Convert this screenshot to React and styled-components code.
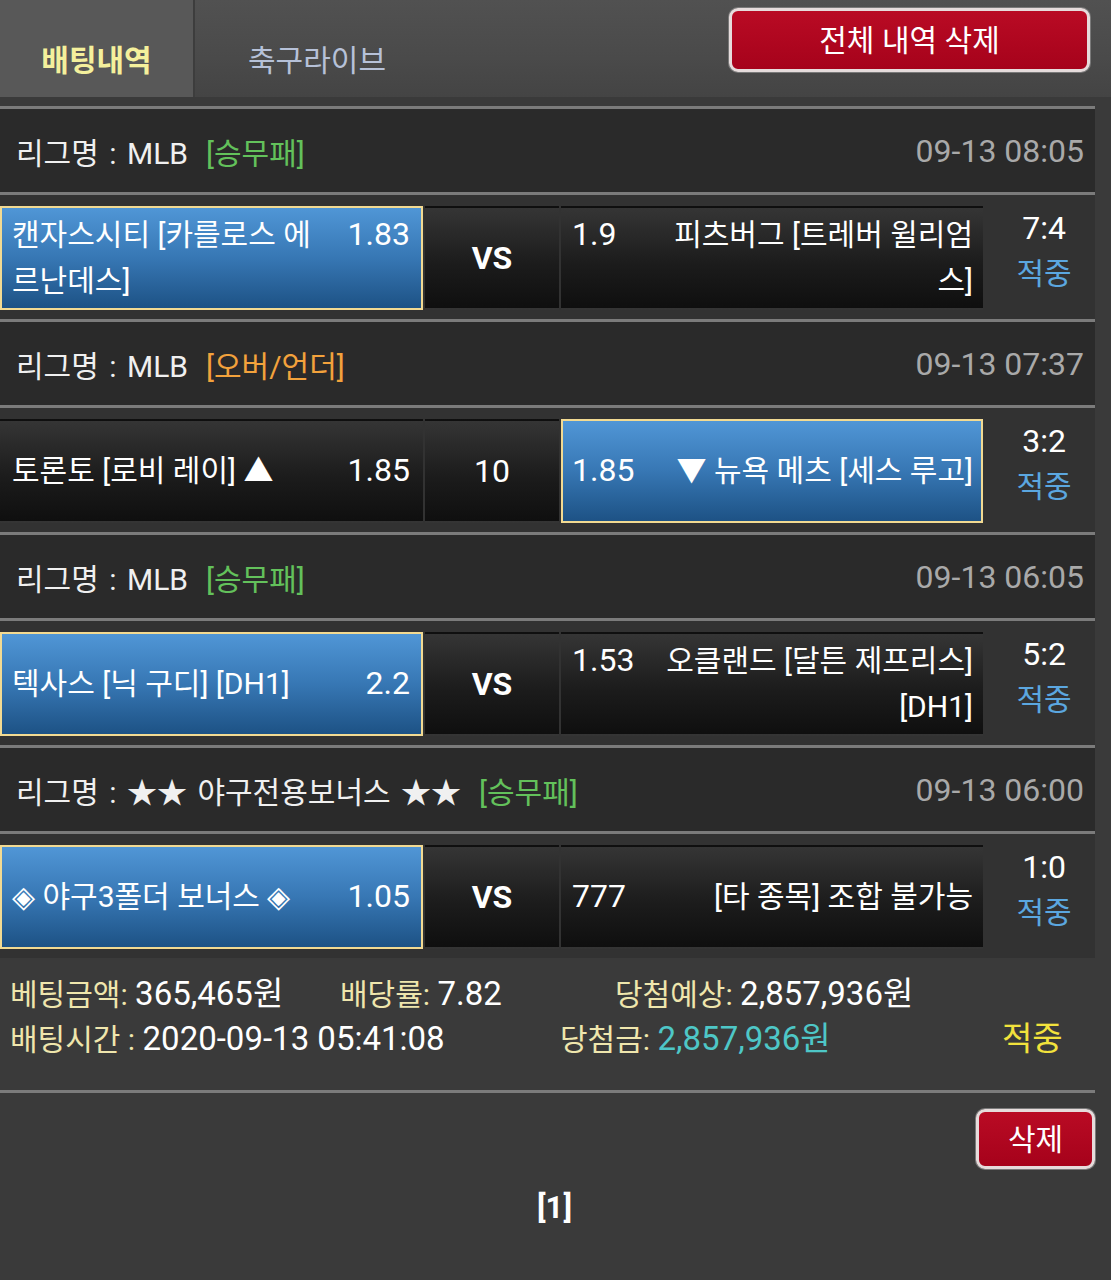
import React from "react";
import styled, { createGlobalStyle } from "styled-components";

const GlobalStyle = createGlobalStyle`
  body {
    margin: 0;
    background: #3a3a3a;
    font-family: Roboto, "Noto Sans CJK KR", sans-serif;
    color: #ffffff;
  }
`;

const Page = styled.div`
  width: 1111px;
`;

const TopBar = styled.div`
  display: flex;
  align-items: stretch;
  height: 97px;
  padding-right: 21px;
  background: linear-gradient(180deg, #515151 0%, #4a4a4a 60%, #444444 100%);
`;

const Tab = styled.div`
  display: flex;
  align-items: center;
  justify-content: center;
  padding-top: 18px;
  font-size: 30px;
  ${(p) =>
    p.$active
      ? `
    width: 195px;
    box-sizing: border-box;
    background: #585858;
    border-right: 2px solid #3d3d3d;
    color: #f4f09c;
    font-weight: 700;
  `
      : `
    padding-left: 53px;
    color: #b6c1d8;
  `}
`;

const Spacer = styled.div`
  flex: 1;
`;

const RedButton = styled.button`
  box-sizing: border-box;
  align-self: ${(p) => p.$align || "flex-start"};
  width: ${(p) => p.$w}px;
  height: ${(p) => p.$h}px;
  margin-top: ${(p) => p.$top || 0}px;
  border: 3px solid #e6dcdc;
  border-radius: 9px;
  box-shadow: 0 0 0 1px #7a7a7a;
  background: linear-gradient(180deg, #b90b24 0%, #a6021b 100%);
  color: #ffffff;
  font-family: Roboto, "Noto Sans CJK KR", sans-serif;
  font-size: 30px;
  padding: 0 0 4px;
`;

const List = styled.div`
  width: 1095px;
  margin-top: 9px;
`;

const LeagueHeader = styled.div`
  display: flex;
  align-items: center;
  justify-content: space-between;
  height: 83px;
  padding: 0 11px 0 16px;
  border-top: 3px solid #7b7b7b;
  background: #2a2a2a;
`;

const LeagueName = styled.div`
  font-size: 30px;
  color: #f0f0f0;
  word-spacing: 3px;
`;

const Tag = styled.span`
  margin-left: 18px;
  word-spacing: 0;
  color: ${(p) => p.$color};
`;

const DateText = styled.div`
  font-size: 32px;
  color: #a9a9a9;
`;

const MatchRow = styled.div`
  display: grid;
  grid-template-columns: 423px 134px 422px 1fr;
  column-gap: 2px;
  height: 127px;
  box-sizing: border-box;
  padding: 11px 0 9px;
  border-top: 3px solid #7b7b7b;
  background: #323232;
`;

const Cell = styled.div`
  display: flex;
  align-items: center;
  justify-content: ${(p) => p.$justify || "stretch"};
  box-sizing: border-box;
  border: 2px solid ${(p) => (p.$picked ? "#f2da92" : "transparent")};
  padding: ${(p) => p.$pad || "0"};
  background: ${(p) =>
    p.$picked
      ? "linear-gradient(180deg, #5096d6 0%, #3777b4 50%, #1d5285 100%)"
      : "linear-gradient(180deg, #353535 0%, #1c1c1c 55%, #0f0f0f 100%)"};
`;

const Inner = styled.div`
  display: flex;
  align-items: baseline;
  width: 100%;
`;

const TeamName = styled.div`
  flex: 1;
  min-width: 0;
  font-size: 30px;
  line-height: 46px;
  text-align: ${(p) => p.$align};
  color: #ffffff;
`;

const Odds = styled.div`
  flex-shrink: 0;
  width: ${(p) => p.$w}px;
  font-size: 32px;
  text-align: ${(p) => p.$align};
  color: #ffffff;
`;

const MidText = styled.div`
  font-size: 32px;
  font-weight: ${(p) => (p.$bold ? 700 : 400)};
  color: #ffffff;
`;

const Result = styled.div`
  display: flex;
  flex-direction: column;
  align-items: center;
  padding-left: 8px;
  line-height: 45px;
`;

const Score = styled.div`
  font-size: 32px;
  color: #ffffff;
`;

const Hit = styled.div`
  font-size: 30px;
  color: #5ba7e0;
`;

const Summary = styled.div`
  height: 135px;
  box-sizing: border-box;
  padding: 16px 0 0 10px;
  border-bottom: 3px solid #7b7b7b;
`;

const SummaryLine = styled.div`
  display: flex;
  align-items: center;
  height: 45px;
`;

const Item = styled.div`
  width: ${(p) => (p.$w ? `${p.$w}px` : "auto")};
  flex-shrink: 0;
  white-space: nowrap;
  line-height: 40px;
`;

const Label = styled.span`
  font-size: 30px;
  color: #efe6ad;
`;

const Value = styled.span`
  font-size: 33px;
  color: ${(p) => p.$color || "#ffffff"};
`;

const Footer = styled.div`
  display: flex;
  flex-direction: column;
  width: 1095px;
  padding-top: 16px;
`;

const Pager = styled.div`
  align-self: center;
  margin: 21px 0 0 14px;
  font-size: 31px;
  font-weight: 700;
  line-height: 36px;
  color: #ffffff;
`;

const GREEN = "#63c15b";
const ORANGE = "#f3a23c";

const sections = [
  {
    league: "MLB",
    tag: "[승무패]",
    tagColor: GREEN,
    date: "09-13 08:05",
    home: { name: "캔자스시티 [카를로스 에르난데스]", odds: "1.83", picked: true },
    mid: "VS",
    away: { name: "피츠버그 [트레버 윌리엄스]", odds: "1.9" },
    score: "7:4",
  },
  {
    league: "MLB",
    tag: "[오버/언더]",
    tagColor: ORANGE,
    date: "09-13 07:37",
    home: { name: "토론토 [로비 레이] ▲", odds: "1.85" },
    mid: "10",
    away: { name: "▼ 뉴욕 메츠 [세스 루고]", odds: "1.85", picked: true },
    score: "3:2",
  },
  {
    league: "MLB",
    tag: "[승무패]",
    tagColor: GREEN,
    date: "09-13 06:05",
    home: { name: "텍사스 [닉 구디] [DH1]", odds: "2.2", picked: true },
    mid: "VS",
    away: { name: "오클랜드 [달튼 제프리스] [DH1]", odds: "1.53" },
    score: "5:2",
  },
  {
    league: "★★ 야구전용보너스 ★★",
    tag: "[승무패]",
    tagColor: GREEN,
    date: "09-13 06:00",
    home: { name: "◈ 야구3폴더 보너스 ◈", odds: "1.05", picked: true },
    mid: "VS",
    away: { name: "[타 종목] 조합 불가능", odds: "777" },
    score: "1:0",
  },
];

function Section({ item }) {
  return (
    <>
      <LeagueHeader>
        <LeagueName>
          리그명 : {item.league}
          <Tag $color={item.tagColor}>{item.tag}</Tag>
        </LeagueName>
        <DateText>{item.date}</DateText>
      </LeagueHeader>
      <MatchRow>
        <Cell $picked={item.home.picked} $pad="0 11px 0 10px">
          <Inner>
            <TeamName $align="left">{item.home.name}</TeamName>
            <Odds $w={84} $align="right">
              {item.home.odds}
            </Odds>
          </Inner>
        </Cell>
        <Cell $justify="center">
          <MidText $bold={item.mid === "VS"}>{item.mid}</MidText>
        </Cell>
        <Cell $picked={item.away.picked} $pad="0 8px 0 9px">
          <Inner>
            <Odds $w={87} $align="left">
              {item.away.odds}
            </Odds>
            <TeamName $align="right">{item.away.name}</TeamName>
          </Inner>
        </Cell>
        <Result>
          <Score>{item.score}</Score>
          <Hit>적중</Hit>
        </Result>
      </MatchRow>
    </>
  );
}

export default function App() {
  return (
    <Page>
      <GlobalStyle />
      <TopBar>
        <Tab $active>배팅내역</Tab>
        <Tab>축구라이브</Tab>
        <Spacer />
        <RedButton $w={361} $h={64} $top={8}>
          전체 내역 삭제
        </RedButton>
      </TopBar>

      <List>
        {sections.map((s, i) => (
          <Section key={i} item={s} />
        ))}

        <Summary>
          <SummaryLine>
            <Item $w={330}>
              <Label>베팅금액: </Label>
              <Value>365,465원</Value>
            </Item>
            <Item $w={275}>
              <Label>배당률: </Label>
              <Value>7.82</Value>
            </Item>
            <Item>
              <Label>당첨예상: </Label>
              <Value>2,857,936원</Value>
            </Item>
          </SummaryLine>
          <SummaryLine>
            <Item $w={550}>
              <Label>배팅시간 : </Label>
              <Value>2020-09-13 05:41:08</Value>
            </Item>
            <Item $w={442}>
              <Label>당첨금: </Label>
              <Value $color="#4ec7c7">2,857,936원</Value>
            </Item>
            <Item>
              <Value $color="#f2e23c">적중</Value>
            </Item>
          </SummaryLine>
        </Summary>
      </List>

      <Footer>
        <RedButton $w={119} $h={60} $align="flex-end">
          삭제
        </RedButton>
        <Pager>[1]</Pager>
      </Footer>
    </Page>
  );
}
